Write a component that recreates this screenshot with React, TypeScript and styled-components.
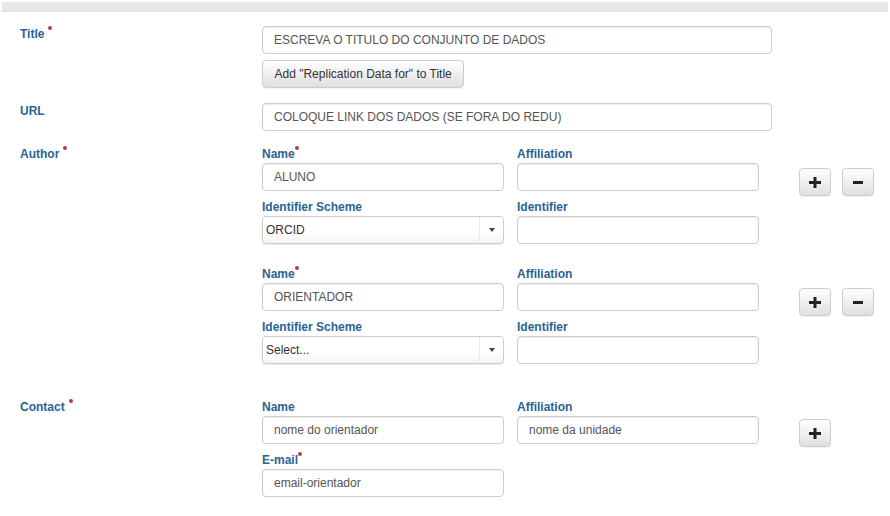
import styled, { createGlobalStyle } from "styled-components";

const GlobalStyle = createGlobalStyle`
  body {
    margin: 0;
    background: #fff;
    font-family: "Liberation Sans", Arial, sans-serif;
    font-size: 12px;
    color: #333;
  }
`;

const PlusIcon = () => (
  <svg width="12" height="11" viewBox="0 0 12 11">
    <path d="M4.5 0h3v4H12v3H7.5v4h-3V7H0V4h4.5z" fill="#222" />
  </svg>
);

const MinusIcon = () => (
  <svg width="10" height="3" viewBox="0 0 10 3">
    <rect width="10" height="3" fill="#222" />
  </svg>
);

type AuthorData = {
  name: string;
  scheme: string;
};

const authors: AuthorData[] = [
  { name: "ALUNO", scheme: "ORCID" },
  { name: "ORIENTADOR", scheme: "Select..." },
];

const App = () => {
  return (
    <Page>
      <GlobalStyle />
      <TopBar />
      <Form>
        <FormRow $top={0}>
          <RowLabel>
            Title<Required $space />
          </RowLabel>
          <FieldColumn $pad={2}>
            <Input $width={510} defaultValue="ESCREVA O TITULO DO CONJUNTO DE DADOS" />
            <TextButton>Add "Replication Data for" to Title</TextButton>
          </FieldColumn>
        </FormRow>

        <FormRow $top={13}>
          <RowLabel>URL</RowLabel>
          <FieldColumn $pad={2}>
            <Input $width={510} defaultValue="COLOQUE LINK DOS DADOS (SE FORA DO REDU)" />
          </FieldColumn>
        </FormRow>

        <FormRow $top={13}>
          <RowLabel>
            Author<Required $space />
          </RowLabel>
          <Blocks>
            {authors.map((a) => (
              <Block key={a.name}>
                <SubGrid>
                  <Field>
                    <SubLabel>
                      Name<Required />
                    </SubLabel>
                    <Input defaultValue={a.name} />
                  </Field>
                  <Field>
                    <SubLabel>Affiliation</SubLabel>
                    <Input defaultValue="" />
                  </Field>
                  <Field>
                    <SubLabel>Identifier Scheme</SubLabel>
                    <Select>
                      <SelectValue>{a.scheme}</SelectValue>
                      <SelectTrigger>
                        <Caret />
                      </SelectTrigger>
                    </Select>
                  </Field>
                  <Field>
                    <SubLabel>Identifier</SubLabel>
                    <Input defaultValue="" />
                  </Field>
                </SubGrid>
                <Actions $top={24}>
                  <IconButton>
                    <PlusIcon />
                  </IconButton>
                  <IconButton>
                    <MinusIcon />
                  </IconButton>
                </Actions>
              </Block>
            ))}
          </Blocks>
        </FormRow>

        <FormRow $top={33}>
          <RowLabel>
            Contact<Required $space />
          </RowLabel>
          <Block>
            <SubGrid>
              <Field>
                <SubLabel>Name</SubLabel>
                <Input defaultValue="nome do orientador" />
              </Field>
              <Field>
                <SubLabel>Affiliation</SubLabel>
                <Input defaultValue="nome da unidade" />
              </Field>
              <Field>
                <SubLabel>
                  E-mail<Required />
                </SubLabel>
                <Input defaultValue="email-orientador" />
              </Field>
            </SubGrid>
            <Actions $top={22}>
              <IconButton>
                <PlusIcon />
              </IconButton>
            </Actions>
          </Block>
        </FormRow>
      </Form>
    </Page>
  );
};

const Page = styled.div`
  width: 890px;
  height: 516px;
  padding: 2px 2px 0 2px;
  box-sizing: border-box;
  overflow: hidden;
`;

const TopBar = styled.div`
  height: 10px;
  background: #e8e8e8;
  border-bottom: 1px solid #e2e2e2;
  box-sizing: border-box;
`;

const Form = styled.div`
  padding: 12px 0 0 18px;
  display: flex;
  flex-direction: column;
`;

const FormRow = styled.div<{ $top: number }>`
  display: flex;
  align-items: flex-start;
  margin-top: ${(p) => p.$top}px;
`;

const RowLabel = styled.div`
  width: 242px;
  flex-shrink: 0;
  padding-top: 2px;
  font-weight: bold;
  line-height: 17px;
  color: #2a6496;
`;

const Required = styled.span<{ $space?: boolean }>`
  display: inline-block;
  width: 4px;
  height: 4px;
  border-radius: 50%;
  background: #b04040;
  margin-left: ${(p) => (p.$space ? 4 : 0)}px;
  vertical-align: 8px;
`;

const FieldColumn = styled.div<{ $pad: number }>`
  display: flex;
  flex-direction: column;
  align-items: flex-start;
  gap: 6px;
  padding-top: ${(p) => p.$pad}px;
`;

const Input = styled.input<{ $width?: number }>`
  width: ${(p) => p.$width ?? 242}px;
  height: 28px;
  box-sizing: border-box;
  padding: 0 11px;
  border: 1px solid #ccc;
  border-radius: 4px;
  box-shadow: inset 0 1px 1px rgba(0, 0, 0, 0.075);
  font-family: "Liberation Sans", Arial, sans-serif;
  font-size: 12px;
  color: #555;
  background: #fff;
  outline: none;
`;

const TextButton = styled.button`
  height: 28px;
  padding: 0 11.5px;
  border: 1px solid #ccc;
  border-radius: 4px;
  background: linear-gradient(#ffffff, #e0e0e0);
  box-shadow: 0 1px 1px rgba(0, 0, 0, 0.06);
  font-family: "Liberation Sans", Arial, sans-serif;
  font-size: 12px;
  color: #333;
  cursor: pointer;
`;

const Blocks = styled.div`
  display: flex;
  flex-direction: column;
  gap: 20px;
`;

const Block = styled.div`
  display: flex;
  align-items: flex-start;
`;

const SubGrid = styled.div`
  display: grid;
  grid-template-columns: 242px 242px;
  column-gap: 13px;
  row-gap: 6px;
`;

const Field = styled.div`
  display: flex;
  flex-direction: column;
`;

const SubLabel = styled.div`
  font-weight: bold;
  line-height: 17px;
  padding-top: 2px;
  color: #2a6496;
`;

const Select = styled.div`
  width: 242px;
  height: 28px;
  box-sizing: border-box;
  display: flex;
  border: 1px solid #ccc;
  border-radius: 4px;
  background: linear-gradient(#ffffff 60%, #f4f4f4);
  box-shadow: 0 1px 1px rgba(0, 0, 0, 0.08);
  overflow: hidden;
`;

const SelectValue = styled.div`
  flex: 1;
  display: flex;
  align-items: center;
  padding-left: 3px;
  color: #333;
`;

const SelectTrigger = styled.div`
  width: 23px;
  display: flex;
  align-items: center;
  justify-content: center;
  border-left: 1px solid #eaeaea;
`;

const Caret = styled.span`
  width: 0;
  height: 0;
  border-left: 3.5px solid transparent;
  border-right: 3.5px solid transparent;
  border-top: 4px solid #444;
`;

const Actions = styled.div<{ $top: number }>`
  display: flex;
  gap: 11px;
  margin-left: 40px;
  margin-top: ${(p) => p.$top}px;
`;

const IconButton = styled.button`
  width: 32px;
  height: 28px;
  padding: 0;
  display: flex;
  align-items: center;
  justify-content: center;
  border: 1px solid #ccc;
  border-radius: 4px;
  background: linear-gradient(#ffffff, #e0e0e0);
  box-shadow: 0 1px 1px rgba(0, 0, 0, 0.06);
  cursor: pointer;
`;

export default App;
